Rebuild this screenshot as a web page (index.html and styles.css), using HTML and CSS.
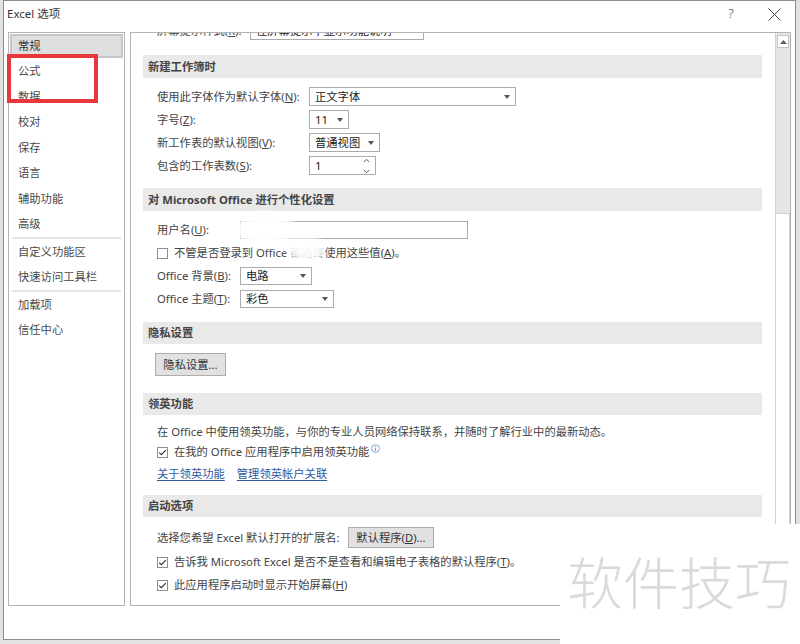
FILE: index.html
```html
<!DOCTYPE html>
<html lang="zh-CN">
<head>
<meta charset="utf-8">
<title>Excel 选项</title>
<link rel="stylesheet" href="styles.css">
</head>
<body>
<div class="dialog">
  <div class="titlebar">
    <span class="title">Excel 选项</span>
    <span class="help">?</span>
    <span class="close"><svg width="13" height="13" viewBox="0 0 13 13"><path d="M0.5 0.5L12.5 12.5M12.5 0.5L0.5 12.5" stroke="#444" stroke-width="1" fill="none"/></svg></span>
  </div>
  <div class="body">
    <nav class="sidebar">
      <div class="nav-item selected">常规</div>
      <div class="nav-item">公式</div>
      <div class="nav-item">数据</div>
      <div class="nav-item">校对</div>
      <div class="nav-item">保存</div>
      <div class="nav-item">语言</div>
      <div class="nav-item">辅助功能</div>
      <div class="nav-item">高级</div>
      <div class="nav-sep"></div>
      <div class="nav-item">自定义功能区</div>
      <div class="nav-item">快速访问工具栏</div>
      <div class="nav-sep"></div>
      <div class="nav-item">加载项</div>
      <div class="nav-item">信任中心</div>
    </nav>
    <main class="panel">
      <div class="content">
        <div class="row r0"><span class="lbl w93">屏幕提示样式(<u>R</u>):</span><div class="select w174"><span>在屏幕提示中显示功能说明</span></div></div>

        <div class="head hd1">新建工作簿时</div>
        <div class="sec s1">
          <div class="row h19"><span class="lbl w152">使用此字体作为默认字体(<u>N</u>):</span><div class="select w207"><span>正文字体</span><i class="caret"></i></div></div>
          <div class="row h19"><span class="lbl w152">字号(<u>Z</u>):</span><div class="select w40"><span>11</span><i class="caret"></i></div></div>
          <div class="row h19"><span class="lbl w152">新工作表的默认视图(<u>V</u>):</span><div class="select w71"><span>普通视图</span><i class="caret"></i></div></div>
          <div class="row h19"><span class="lbl w152">包含的工作表数(<u>S</u>):</span><div class="select w67"><span>1</span><svg class="spin" width="7" height="16" viewBox="0 0 7 16"><path d="M0.8 4L3.5 1.3L6.2 4M0.8 12L3.5 14.7L6.2 12" stroke="#555" stroke-width="1" fill="none"/></svg></div></div>
        </div>

        <div class="head hd2">对 Microsoft Office 进行个性化设置</div>
        <div class="sec s2">
          <div class="row h18"><span class="lbl w83">用户名(<u>U</u>):</span><div class="input w228"></div></div>
          <div class="row h18"><span class="cb"></span><span>不管是否登录到 Office 都始终使用这些值(<u>A</u>)。</span></div>
          <div class="row h18"><span class="lbl w83">Office 背景(<u>B</u>):</span><div class="select w72"><span>电路</span><i class="caret"></i></div></div>
          <div class="row h18"><span class="lbl w83">Office 主题(<u>T</u>):</span><div class="select w94"><span>彩色</span><i class="caret"></i></div></div>
        </div>

        <div class="head hd3">隐私设置</div>
        <div class="sec s3">
          <div class="btn b-privacy">隐私设置...</div>
        </div>

        <div class="head hd4">领英功能</div>
        <div class="sec s4">
          <div class="row h20">在 Office 中使用领英功能，与你的专业人员网络保持联系，并随时了解行业中的最新动态。</div>
          <div class="row h20"><span class="cb checked"><svg width="9" height="9" viewBox="0 0 9 9"><path d="M1.2 4.6L3.4 6.7L7.8 2.2" stroke="#333" stroke-width="1.2" fill="none"/></svg></span><span>在我的 Office 应用程序中启用领英功能</span><svg class="info" width="9" height="9" viewBox="0 0 9 9"><circle cx="4.5" cy="4.5" r="3.9" stroke="#6f8fc4" stroke-width="0.8" fill="none"/><path d="M4.5 3.8V7" stroke="#6f8fc4" stroke-width="0.9"/><circle cx="4.5" cy="2.4" r="0.5" fill="#6f8fc4"/></svg></div>
          <div class="row h20 links"><a class="link">关于领英功能</a><a class="link">管理领英帐户关联</a></div>
        </div>

        <div class="head hd5">启动选项</div>
        <div class="sec s5">
          <div class="row h21"><span class="lbl w191">选择您希望 Excel 默认打开的扩展名:</span><div class="btn b-default">默认程序(<u>D</u>)...</div></div>
          <div class="row h20 mt4"><span class="cb checked"><svg width="9" height="9" viewBox="0 0 9 9"><path d="M1.2 4.6L3.4 6.7L7.8 2.2" stroke="#333" stroke-width="1.2" fill="none"/></svg></span><span>告诉我 Microsoft Excel 是否不是查看和编辑电子表格的默认程序(<u>T</u>)。</span></div>
          <div class="row h20 mt3"><span class="cb checked"><svg width="9" height="9" viewBox="0 0 9 9"><path d="M1.2 4.6L3.4 6.7L7.8 2.2" stroke="#333" stroke-width="1.2" fill="none"/></svg></span><span>此应用程序启动时显示开始屏幕(<u>H</u>)</span></div>
        </div>
      </div>
      <div class="scrollbar">
        <div class="sb-thumbzone">
          <div class="sb-up"><svg width="7" height="4" viewBox="0 0 7 4"><path d="M0 4L3.5 0L7 4Z" fill="#606060"/></svg></div>
        </div>
        <div class="sb-track"></div>
      </div>
    </main>
  </div>
  <div class="footer"></div>
</div>
<div class="annot"></div>
<div class="smear smear-a"></div>
<div class="smear smear-b"></div>
<div class="watermark">软件技巧</div>
</body>
</html>
```
FILE: styles.css
```css
* { box-sizing: border-box; }
html, body { margin: 0; padding: 0; }
body {
  width: 800px;
  height: 644px;
  overflow: hidden;
  position: relative;
  background: #e2e2e2;
  font-family: "Noto Sans", "Noto Sans CJK SC", sans-serif;
  font-size: 11.3px;
  line-height: 1.2;
  color: #444;
}
u { text-decoration: underline; text-underline-offset: 1px; }

.dialog {
  margin-left: 3px;
  width: 793px;
  height: 640px;
  border: 1px solid #8c8c8c;
  background: #fff;
  display: flex;
  flex-direction: column;
}

.titlebar {
  height: 31px;
  flex: none;
  display: flex;
  align-items: flex-start;
  padding: 6px 14px 0 3px;
}
.title { font-size: 11.5px; line-height: 14px; color: #333; }
.help {
  margin-left: auto;
  width: 12px;
  text-align: center;
  font-size: 13px;
  line-height: 13px;
  color: #444;
  font-weight: 300;
}
.close { margin-left: 31px; width: 13px; height: 13px; margin-top: 1px; display: block; }
.close svg { display: block; }

.body {
  height: 574px;
  flex: none;
  display: flex;
  gap: 5px;
  padding: 0 4px;
}

.sidebar {
  width: 117px;
  flex: none;
  border: 1px solid #b3b3b3;
}
.nav-item {
  height: 25.5px;
  display: flex;
  align-items: center;
  padding-left: 9px;
  color: #4a4a4a;
}
.nav-item.selected {
  background: #dedede;
  box-shadow: inset 0 0 0 1px #fff, inset 0 0 0 3px #c6c6c6;
  color: #333;
}
.nav-sep { height: 2px; margin: 0 3px; background: #e4e4e4; }

.panel {
  width: 661px;
  flex: none;
  border: 1px solid #b3b3b3;
  display: flex;
}
.content {
  flex: 1;
  overflow: hidden;
  padding: 0 13px 0 12px;
  display: flex;
  flex-direction: column;
}

.row {
  display: flex;
  align-items: center;
  padding-left: 14px;
  white-space: nowrap;
  flex: none;
}
.h18 { height: 18px; }
.h19 { height: 19px; }
.h20 { height: 20px; }
.h21 { height: 21px; }
.mt3 { margin-top: 3px; }
.mt4 { margin-top: 4px; }
.r0 { height: 19px; margin-top: -12px; }

.lbl { flex: none; }
.w83 { width: 83px; }
.w93 { width: 93px; }
.w152 { width: 152px; }
.w191 { width: 191px; }

.select, .input {
  height: 100%;
  border: 1px solid #ababab;
  background: #fff;
  display: flex;
  align-items: center;
  justify-content: space-between;
  padding: 0 5px 0 5px;
  color: #222;
  flex: none;
}
.w40 { width: 40px; }
.w67 { width: 67px; }
.w71 { width: 71px; }
.w72 { width: 72px; }
.w94 { width: 94px; }
.w174 { width: 174px; }
.w207 { width: 207px; }
.w228 { width: 228px; }
.caret {
  width: 0;
  height: 0;
  border-left: 3.5px solid transparent;
  border-right: 3.5px solid transparent;
  border-top: 4px solid #555;
  flex: none;
}
.spin { display: block; flex: none; }

.head {
  height: 23px;
  flex: none;
  background: #e9e9e9;
  display: flex;
  align-items: center;
  padding-left: 5px;
  font-weight: 700;
  color: #444;
}
.hd1 { margin-top: 15px; }
.hd2 { margin-top: 13px; }
.hd3 { margin-top: 14px; height: 22px; }
.hd4 { margin-top: 17px; height: 22px; }
.hd5 { margin-top: 11px; height: 22px; }

.sec { display: flex; flex-direction: column; flex: none; }
.s1 { padding-top: 9px; gap: 4px; }
.s2 { padding-top: 10px; gap: 5px; }
.s3 { padding-top: 9px; padding-left: 12px; }
.s4 { padding-top: 7px; }
.s5 { padding-top: 10px; }

.cb {
  width: 11px;
  height: 11px;
  border: 1px solid #8e8e8e;
  background: #fff;
  margin-right: 6px;
  flex: none;
  display: flex;
  align-items: center;
  justify-content: center;
}
.cb svg { display: block; }
.info { margin-left: 2px; align-self: flex-start; margin-top: 2px; }

.links { margin-top: 2px; gap: 12px; }
.link { color: #2f5a9e; text-decoration: underline; text-underline-offset: 2px; }

.btn {
  background: #e1e1e1;
  border: 1px solid #adadad;
  color: #333;
  display: flex;
  align-items: center;
  justify-content: center;
  flex: none;
}
.b-privacy { width: 71px; height: 23px; }
.b-default { width: 86px; height: 21px; }

.scrollbar {
  width: 15px;
  flex: none;
  display: flex;
  flex-direction: column;
  border-left: 1px solid #d2d2d2;
}
.sb-thumbzone {
  height: 180px;
  background: #e6e6e6;
  padding: 2px 1px 0 1px;
}
.sb-up {
  height: 13px;
  background: #fff;
  border: 1px solid #c4c4c4;
  display: flex;
  align-items: center;
  justify-content: center;
}
.sb-up svg { display: block; }
.sb-track { flex: 1; background: #fff; border-top: 1px solid #cfcfcf; border-right: 1px solid #cfcfcf; }

.footer { flex: 1; }

.annot {
  position: absolute;
  left: 7px;
  top: 54px;
  width: 91px;
  height: 49px;
  border: 4px solid #e6373a;
}
.smear {
  position: absolute;
  background: rgba(255, 255, 255, 0.95);
  filter: blur(3px);
  border-radius: 50%;
}
.smear-a { left: 234px; top: 214px; width: 64px; height: 32px; }
.smear-b { left: 286px; top: 237px; width: 40px; height: 24px; }

.watermark {
  position: absolute;
  left: 560px;
  top: 524px;
  width: 240px;
  height: 120px;
  background: #fff;
  padding: 28px 0 0 7px;
  font-family: "Noto Sans CJK SC", sans-serif;
  font-size: 56px;
  line-height: 56px;
  font-weight: 300;
  color: #dadada;
  white-space: nowrap;
}
```
